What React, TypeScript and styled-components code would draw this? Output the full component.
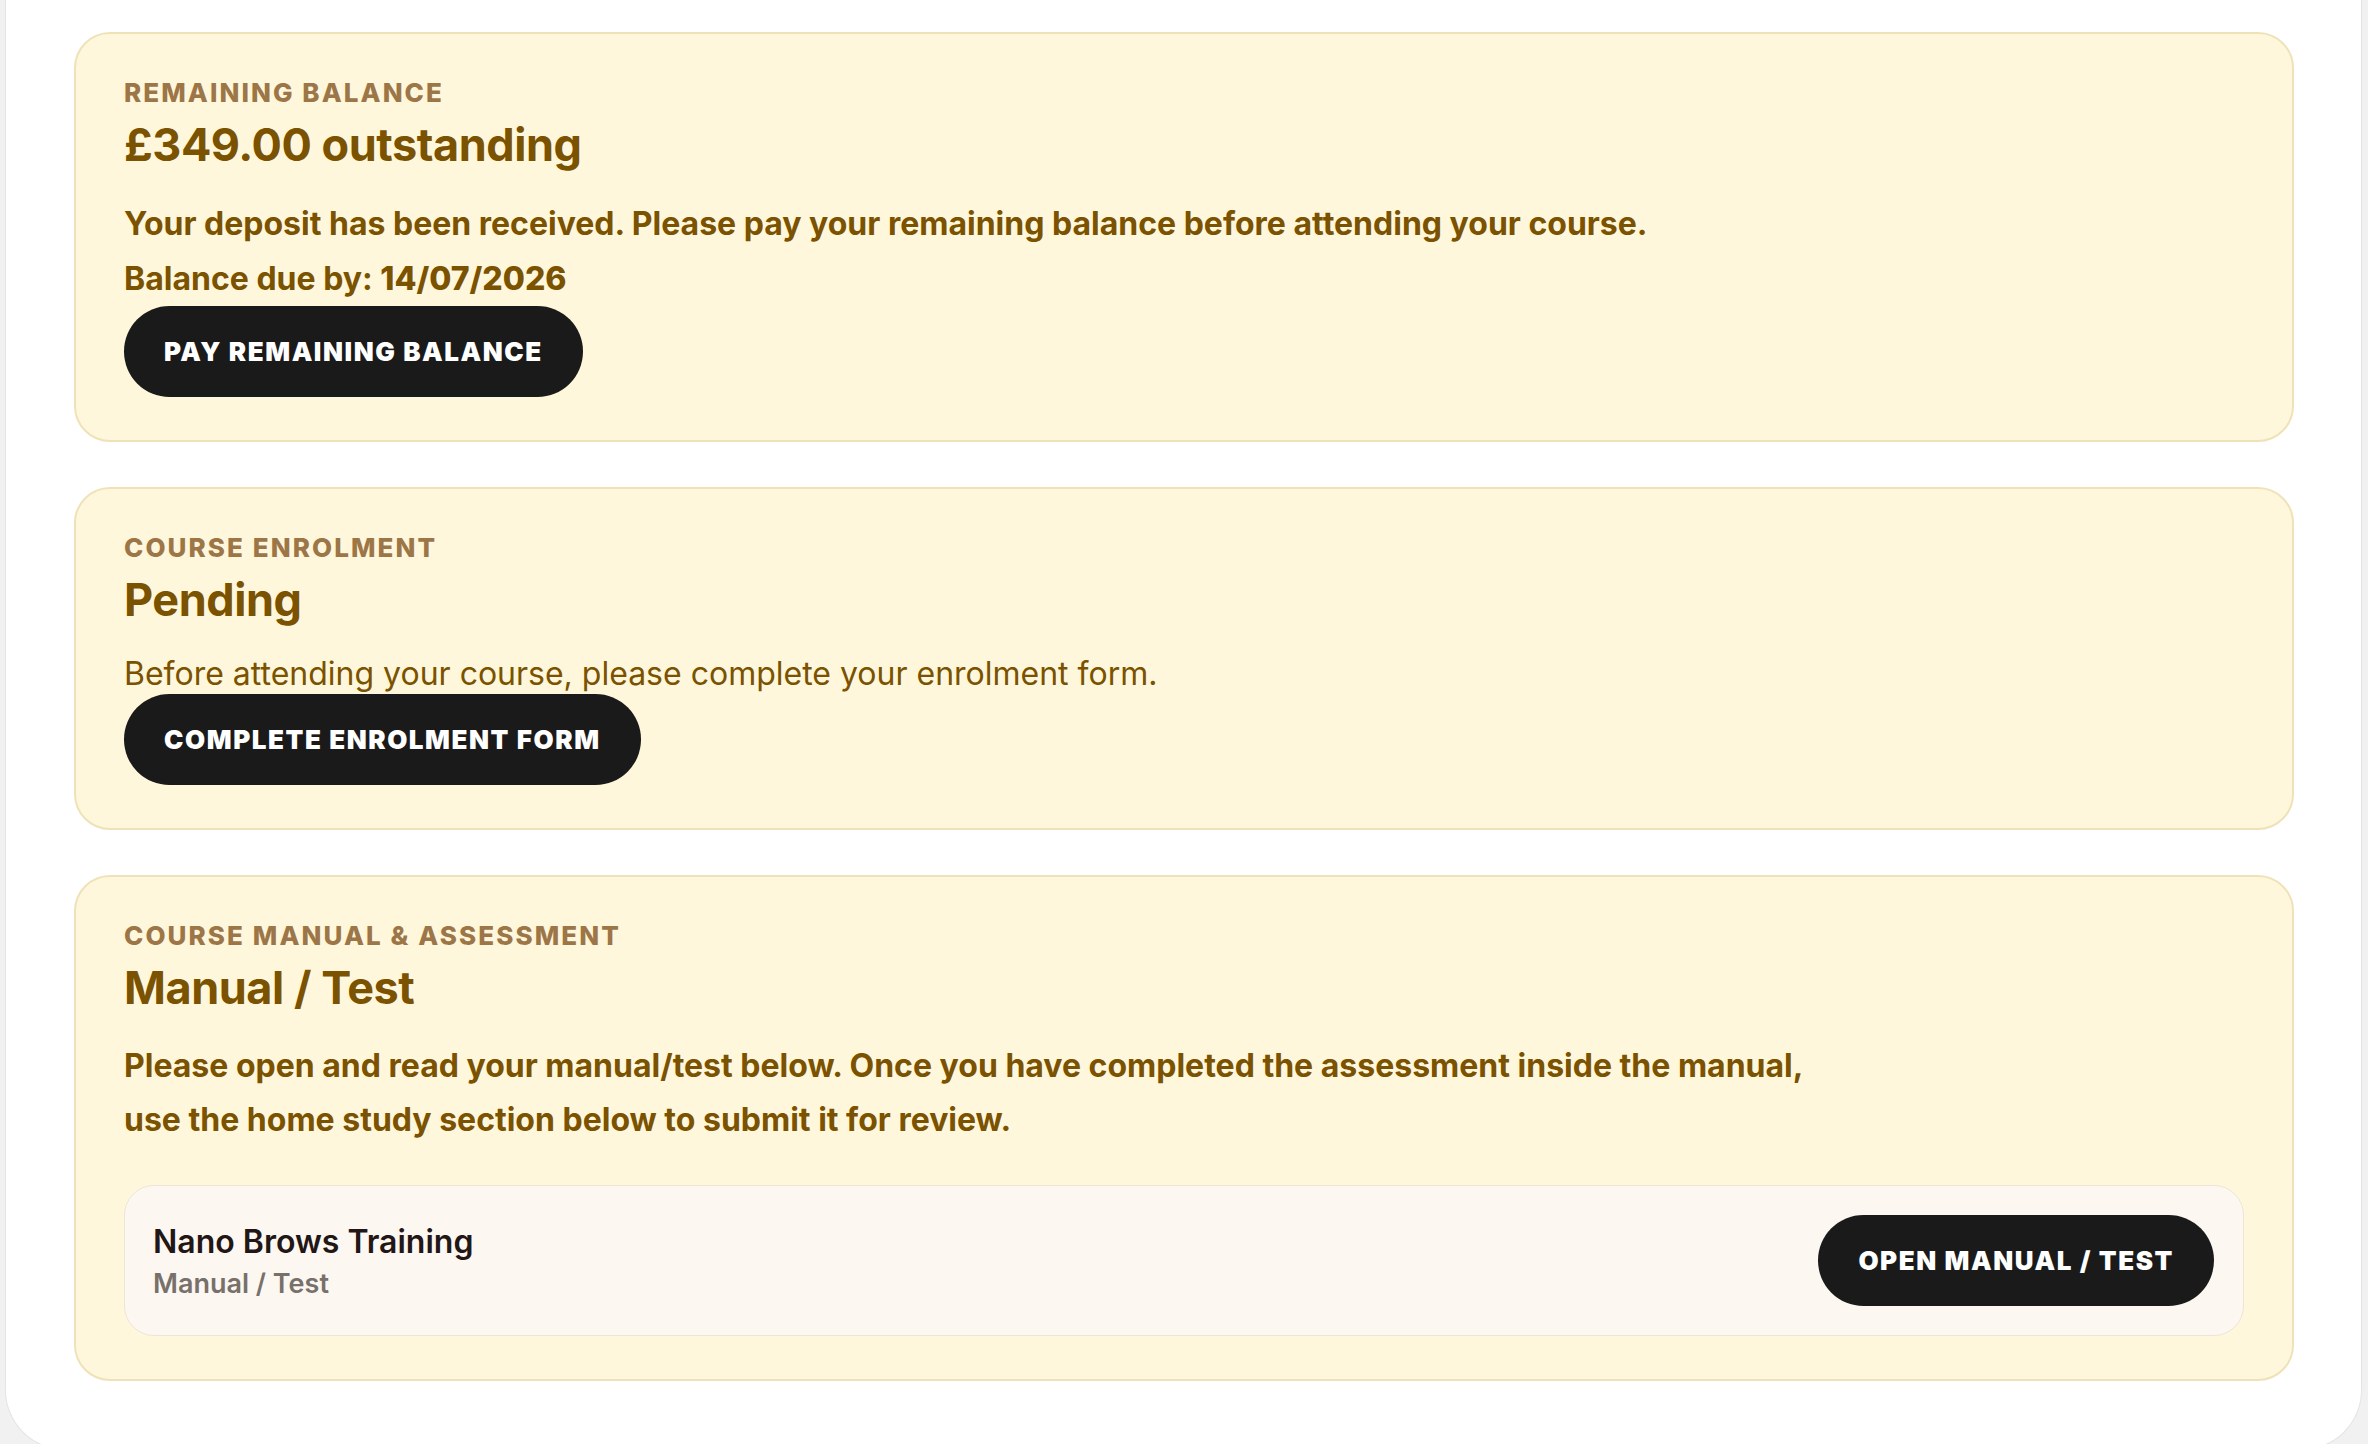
import styled, { createGlobalStyle } from 'styled-components';

const GlobalStyle = createGlobalStyle`
  html, body {
    margin: 0;
    padding: 0;
    background: #f1f1f1;
  }
  body {
    font-family: Inter, 'Noto Sans', 'Liberation Sans', sans-serif;
    -webkit-font-smoothing: antialiased;
  }
  * {
    box-sizing: border-box;
  }
`;

function App() {
  return (
    <>
      <GlobalStyle />
      <Page>
        <Panel>
          <Card>
            <Label>Remaining balance</Label>
            <Title>£349.00 outstanding</Title>
            <Body $weight={700} $lineHeight={55}>
              Your deposit has been received. Please pay your remaining
              balance before attending your course.
            </Body>
            <Body $weight={700} $lineHeight={55} $gap={0}>
              Balance due by: <strong>14/07/2026</strong>
            </Body>
            <PillButton>Pay remaining balance</PillButton>
          </Card>

          <Card>
            <Label>Course enrolment</Label>
            <Title>Pending</Title>
            <Body $weight={400} $lineHeight={40} $gap={27}>
              Before attending your course, please complete your enrolment
              form.
            </Body>
            <PillButton>Complete enrolment form</PillButton>
          </Card>

          <Card>
            <Label>Course manual &amp; assessment</Label>
            <Title>Manual / Test</Title>
            <Body $weight={700} $lineHeight={54} $maxWidth={1730}>
              Please open and read your manual/test below. Once you have
              completed the assessment inside the manual, use the home study
              section below to submit it for review.
            </Body>
            <ManualItem>
              <ItemText>
                <ItemTitle>Nano Brows Training</ItemTitle>
                <ItemMeta>Manual / Test</ItemMeta>
              </ItemText>
              <PillButton>Open manual / test</PillButton>
            </ManualItem>
          </Card>
        </Panel>
      </Page>
    </>
  );
}

export default App;

const Page = styled.div`
  padding: 0 6px 0 5px;
  min-height: 1444px;
`;

const Panel = styled.main`
  background: #ffffff;
  border: 1.5px solid #e4e4e4;
  border-top: none;
  border-radius: 0 0 60px 60px;
  padding: 32px 67px 68px 68px;
  display: flex;
  flex-direction: column;
  gap: 45px;
`;

const Card = styled.section`
  background: #fff7dc;
  border: 2px solid #efe2b9;
  border-radius: 36px;
  padding: 43px 48px;
  display: flex;
  flex-direction: column;
  align-items: flex-start;
`;

const Label = styled.div`
  font-size: 26px;
  line-height: 31px;
  font-weight: 800;
  letter-spacing: 0.08em;
  text-transform: uppercase;
  color: #9c7647;
`;

const Title = styled.h2`
  margin: 10px 0 0;
  font-size: 45px;
  line-height: 54px;
  font-weight: 700;
  letter-spacing: -0.01em;
  color: #7a5200;
`;

const Body = styled.p<{
  $weight: number;
  $lineHeight: number;
  $maxWidth?: number;
  $gap?: number;
}>`
  margin: ${(p) => p.$gap ?? 24}px 0 0;
  max-width: ${(p) => (p.$maxWidth ? `${p.$maxWidth}px` : 'none')};
  font-size: 32px;
  line-height: ${(p) => p.$lineHeight}px;
  font-weight: ${(p) => p.$weight};
  color: #7a5200;
  strong {
    font-weight: 800;
  }
`;

const PillButton = styled.button`
  display: inline-flex;
  align-items: center;
  justify-content: center;
  height: 91px;
  padding: 0 40px;
  border: none;
  border-radius: 999px;
  background: #1b1a1a;
  color: #ffffff;
  font-family: inherit;
  font-size: 26px;
  font-weight: 900;
  letter-spacing: 0.06em;
  text-transform: uppercase;
  cursor: pointer;
  flex-shrink: 0;
`;

const ManualItem = styled.div`
  align-self: stretch;
  margin-top: 38px;
  display: flex;
  align-items: center;
  justify-content: space-between;
  padding: 29px 29px 29px 28px;
  background: #fcf8f1;
  border: 1.5px solid #eee4d8;
  border-radius: 30px;
`;

const ItemText = styled.div`
  display: flex;
  flex-direction: column;
  gap: 4px;
`;

const ItemTitle = styled.div`
  font-size: 32px;
  line-height: 41px;
  font-weight: 600;
  color: #221616;
`;

const ItemMeta = styled.div`
  font-size: 27px;
  line-height: 35px;
  font-weight: 600;
  color: #78706b;
`;
